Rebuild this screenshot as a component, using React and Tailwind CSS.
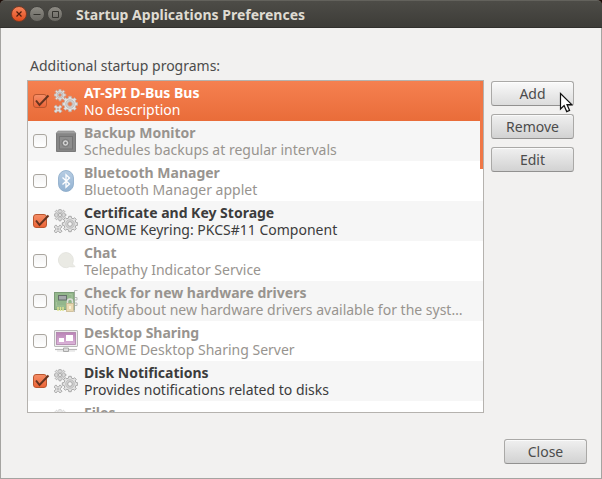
import React from 'react';

function gearPath(cx, cy, outer, inner, teeth, turn = 0) {
  const step = (Math.PI * 2) / teeth;
  const points = [];
  for (let i = 0; i < teeth; i++) {
    const a = i * step + turn;
    [[-0.31, inner], [-0.2, outer], [0.2, outer], [0.31, inner]].forEach(([k, r]) => {
      points.push(`${(cx + r * Math.cos(a + k * step)).toFixed(2)} ${(cy + r * Math.sin(a + k * step)).toFixed(2)}`);
    });
  }
  return `M${points.join('L')}Z`;
}

const smallGear = gearPath(6, 6, 5.9, 4.4, 8);
const largeGear = gearPath(16, 15, 7.8, 6.1, 8);
const tinyGear = gearPath(4, 20, 4.6, 2.4, 4, Math.PI / 4);

function GearsIcon({ selected }) {
  const line = selected ? '#c4aea5' : '#a3a3a3';
  const hole = selected ? '#ef7b4c' : '#f6f6f6';
  return (
    <svg viewBox="0 0 24 24" className="size-6" aria-hidden="true">
      <g fill="#e2e2e2" stroke={line} strokeWidth="0.9" strokeLinejoin="round">
        <path d={smallGear} />
        <path d={largeGear} />
        <path d={tinyGear} />
        <circle cx="16" cy="15" r="4.300" fill="#d2d2d2" stroke="#bcbcbc" />
        <circle cx="16" cy="15" r="2.300" fill={hole} />
        <circle cx="6" cy="6" r="3" fill="#cfcfcf" stroke="#b8b8b8" strokeWidth="0.7" />
        <circle cx="6" cy="6" r="1.500" fill={hole} />
        <circle cx="4" cy="20" r="0.8" fill={hole} strokeWidth="0.7" />
      </g>
    </svg>
  );
}

function SafeIcon() {
  return (
    <svg viewBox="0 0 24 24" className="size-6" aria-hidden="true">
      <path d="M2.500 4h19v18.500h-19z" fill="#868686" stroke="#7b7b7b" />
      <path d="M2.200 4.500L4 2h16l1.800 2.500z" fill="#a0a0a0" stroke="#8c8c8c" strokeWidth="0.6" />
      <rect x="5.500" y="7.500" width="13" height="12.500" fill="#8e8e8e" stroke="#747474" />
      <circle cx="11.500" cy="14" r="3.600" fill="#a6a6a6" stroke="#777" />
      <circle cx="11.500" cy="14" r="2" fill="none" stroke="#dcdcdc" />
      <circle cx="11.500" cy="14" r="1" fill="#777" />
    </svg>
  );
}

function BluetoothIcon() {
  return (
    <svg viewBox="0 0 24 24" className="size-6" aria-hidden="true">
      <defs>
        <linearGradient id="bt" x2="0" y2="1">
          <stop stopColor="#b7cde3" />
          <stop offset="1" stopColor="#92b2d2" />
        </linearGradient>
      </defs>
      <rect x="4.500" y="1.500" width="15" height="21" rx="7.500" fill="url(#bt)" stroke="#8aa9c8" strokeWidth="0.8" />
      <path d="M8.500 8.500l7 6.500-3.500 3.200V5.800l3.500 3.200-7 6.500" fill="none" stroke="#fff" strokeWidth="1.300" />
    </svg>
  );
}

function ChatIcon() {
  return (
    <svg viewBox="0 0 24 24" className="size-6" aria-hidden="true">
      <path d="M11.500 3.500a7.600 7.600 0 1 0 4.200 14.200c1.600.3 3.600.4 5.500-.1-1.300-1-2.300-2-2.600-3.200A7.600 7.600 0 0 0 11.500 3.500z" fill="#eaeae4" stroke="#dfdfda" strokeWidth="0.7" />
    </svg>
  );
}

function HardwareIcon() {
  return (
    <svg viewBox="0 0 24 24" className="size-6" aria-hidden="true">
      <path d="M20.500 23V1.500H23.500M20.500 8.500H23v2.500h-2.500M20.500 14H23v2.500h-2.500" fill="none" stroke="#b9bbb8" />
      <rect x="0.500" y="3.500" width="19.500" height="17" fill="#93b78c" stroke="#7c9c77" />
      <path d="M2.500 13v4h8M15 5.500h3v6" fill="none" stroke="#a9c7a0" strokeWidth="0.8" />
      <rect x="4.500" y="6.500" width="8" height="4.500" fill="#a4a8ab" stroke="#65716a" />
      <path d="M4 22v-4M6.500 22v-4M9 22v-4" stroke="#dde391" strokeWidth="1.500" />
      <path d="M13.500 14.500v-2a2.500 2.500 0 0 1 5 0v2" fill="none" stroke="#dededa" strokeWidth="1.500" />
      <rect x="12.500" y="14.500" width="7" height="8" fill="#ead9b1" stroke="#c9b993" strokeWidth="0.800" />
      <path d="M16 17v3" stroke="#fffbe9" strokeWidth="1.400" />
    </svg>
  );
}

function DesktopIcon() {
  return (
    <svg viewBox="0 0 24 24" className="size-6" aria-hidden="true">
      <defs>
        <linearGradient id="screen" x2="0" y2="1">
          <stop stopColor="#b983b6" />
          <stop offset="1" stopColor="#dcb5da" />
        </linearGradient>
      </defs>
      <rect x="0.500" y="1.500" width="23" height="16" rx="0.500" fill="#ededed" stroke="#b9b9b9" />
      <rect x="2.500" y="3.500" width="19" height="12" fill="url(#screen)" stroke="#ad82aa" strokeWidth="0.800" />
      <path d="M12 6h7v6h-7zM5 9h5v4H5z" fill="#fff" />
      <path d="M1 20.500h22" stroke="#b9b9b9" strokeWidth="1.200" />
      <path d="M3 22h18" stroke="#d9d9d9" />
      <path d="M9.500 19h5v3.500h-5z" fill="#dcdcdc" stroke="#a9a9a9" />
    </svg>
  );
}

const programs = [
  { name: 'AT-SPI D-Bus Bus', note: 'No description', icon: GearsIcon, on: true, selected: true },
  { name: 'Backup Monitor', note: 'Schedules backups at regular intervals', icon: SafeIcon },
  { name: 'Bluetooth Manager', note: 'Bluetooth Manager applet', icon: BluetoothIcon },
  { name: 'Certificate and Key Storage', note: 'GNOME Keyring: PKCS#11 Component', icon: GearsIcon, on: true },
  { name: 'Chat', note: 'Telepathy Indicator Service', icon: ChatIcon },
  { name: 'Check for new hardware drivers', note: 'Notify about new hardware drivers available for the syst…', icon: HardwareIcon },
  { name: 'Desktop Sharing', note: 'GNOME Desktop Sharing Server', icon: DesktopIcon },
  { name: 'Disk Notifications', note: 'Provides notifications related to disks', icon: GearsIcon, on: true },
  { name: 'Files', note: '', icon: GearsIcon },
];

function ProgramRow({ program }) {
  const { name, note, icon: Icon, on, selected } = program;
  const tone = selected
    ? 'bg-linear-to-b from-[#f58050] to-[#e96c39] text-white'
    : on
      ? 'odd:bg-white even:bg-[#f6f6f6] text-[#3c3c3c]'
      : 'odd:bg-white even:bg-[#f6f6f6] text-[#98948f]';
  return (
    <li className={`h-10 shrink-0 ${tone}`}>
      <label className="flex h-full items-center pl-[5px] pr-2">
        <span className="relative flex size-[14px] shrink-0">
          <input
            type="checkbox"
            defaultChecked={on}
            className="peer size-full appearance-none rounded-[3px] border border-[#aaa69f] bg-linear-to-b from-[#f3f3f3] to-white checked:border-[#b9562f] checked:from-[#f58d66] checked:to-[#ec6436]"
          />
          <svg viewBox="0 0 17 14" className="pointer-events-none absolute top-0 left-0 hidden h-[14px] w-[17px] peer-checked:block" aria-hidden="true">
            <path d="M3 6.500l3.500 4.500L15.500 1.500" fill="none" stroke="#663420" strokeWidth="2" />
          </svg>
        </span>
        <span className={`ml-[7px] shrink-0 ${!on && Icon === GearsIcon ? 'opacity-50' : ''}`}>
          <Icon selected={selected} />
        </span>
        <span className="ml-[6px] h-[34px] min-w-0 flex-1 text-[14px] leading-[17px] whitespace-nowrap">
          <span className="block overflow-x-clip font-bold text-ellipsis">{name}</span>
          <span className="block overflow-x-clip text-ellipsis">{note}</span>
        </span>
      </label>
    </li>
  );
}

function Button({ children, hovered }) {
  const fill = hovered ? 'from-[#fafafa] to-[#dcdcdc]' : 'from-[#f0f0f0] to-[#d2d2d2]';
  return (
    <button
      type="button"
      className={`flex h-[25px] w-[83px] items-center justify-center rounded-[3px] border border-[#aaa9a7] border-b-[#929190] bg-linear-to-b text-[14px] leading-[17px] text-[#4c4c4c] shadow-[inset_0_1px_0_#ffffffb0] ${fill}`}
    >
      {children}
    </button>
  );
}

function WindowButton({ label, close, children }) {
  const look = close
    ? 'from-[#f58359] to-[#e04a18] border-[#7a3a24] text-[#4d1c0c]'
    : 'from-[#8c8a83] to-[#6a6862] border-[#43423e] text-[#35342f]';
  return (
    <button type="button" aria-label={label} className={`size-4 rounded-full border bg-linear-to-b ${look}`}>
      <svg viewBox="0 0 14 14" className="size-full" fill="none" stroke="currentColor" aria-hidden="true">
        {children}
      </svg>
    </button>
  );
}

export default function App() {
  return (
    <div className="flex h-screen flex-col bg-[#1c0d08] font-['Noto_Sans','Open_Sans',sans-serif]">
      <header className="flex h-7 shrink-0 items-center rounded-t-[5px] border-t border-b border-t-[#63625c] border-b-[#31302d] bg-linear-to-b from-[#4d4c47] to-[#3d3c38] pl-[11px]">
        <div className="flex gap-[2px]">
          <WindowButton label="Close window" close>
            <path d="M4.500 4.500l5 5M9.500 4.500l-5 5" strokeWidth="1.200" />
          </WindowButton>
          <WindowButton label="Minimize">
            <path d="M3.500 7.500h7" />
          </WindowButton>
          <WindowButton label="Maximize">
            <path d="M4.500 4.500h6v6h-6z" />
          </WindowButton>
        </div>
        <h1 className="ml-[13px] text-[14px] leading-[17px] font-bold text-[#dfdbd2]">Startup Applications Preferences</h1>
      </header>

      <main className="flex min-h-0 flex-1 flex-col border border-t-0 border-[#a5a4a1] bg-[#f2f1f0] pt-[29px] pr-[27px] pl-[26px] text-[#4c4c4c]">
        <h2 id="programs-label" className="ml-[3px] text-[14px] leading-[17px]">Additional startup programs:</h2>
        <div className="mt-[6px] flex min-h-0 flex-1 gap-[7px]">
          <div className="relative min-w-0 flex-1 overflow-hidden border border-[#b5b2ae] bg-white">
            <ul aria-labelledby="programs-label" className="flex h-full flex-col overflow-hidden">
              {programs.map((program) => (
                <ProgramRow key={program.name} program={program} />
              ))}
            </ul>
            <div className="absolute top-0 right-0 h-[88px] w-[3px] bg-[#f07746]" />
          </div>
          <div className="flex flex-col gap-2 pt-px">
            <div className="relative">
              <Button hovered>Add</Button>
              <svg viewBox="0 0 14 21" className="pointer-events-none absolute top-[11px] left-[68px] h-[21px] w-[14px]" aria-hidden="true">
                <path d="M1.500 1.500v15.500l3.600-3.400 2.600 6 2.900-1.200-2.600-5.800h4.800z" fill="#fff" stroke="#111" strokeWidth="1.200" />
              </svg>
            </div>
            <Button>Remove</Button>
            <Button>Edit</Button>
          </div>
        </div>
        <footer className="-mr-[13px] flex justify-end pt-[26px] pb-[14px]">
          <Button>Close</Button>
        </footer>
      </main>
    </div>
  );
}
